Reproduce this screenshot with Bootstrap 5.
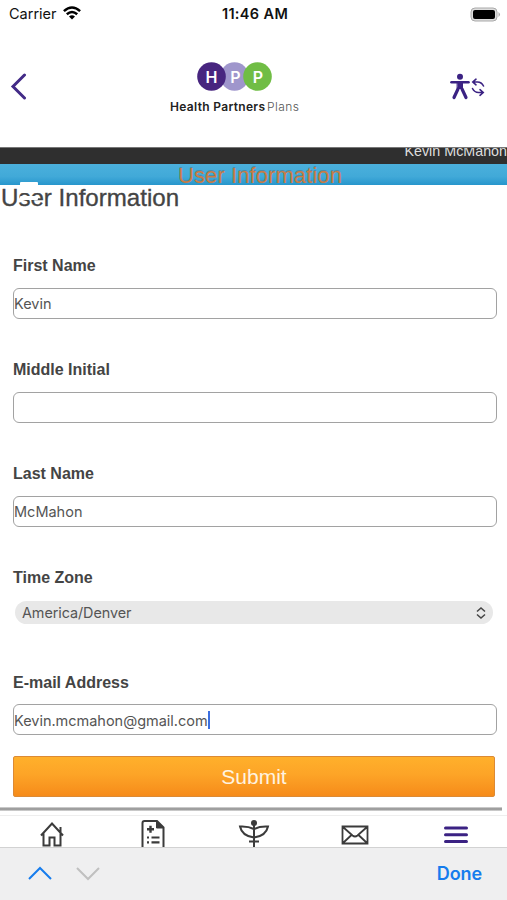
<!DOCTYPE html>
<html lang="en">
<head>
<meta charset="utf-8">
<meta name="viewport" content="width=device-width, initial-scale=1">
<title>User Information</title>
<link rel="stylesheet" href="https://cdn.jsdelivr.net/npm/bootstrap@5.3.0/dist/css/bootstrap.min.css">
<style>
body{height:900px;overflow:hidden;background:#fff;color:#444;font-family:"Liberation Sans",Arial,sans-serif}
svg{display:block;flex:none}
.status{height:28px;font:14.5px/28px Inter,sans-serif;color:#111;padding:0 6px 0 9px}
.status>div{flex:1 1 0}
.clock{font-weight:600;letter-spacing:.35px}
.wifi{margin-top:-3px;margin-left:6px}
.brandbar{height:119px;padding:32px 21px 0 10px}
.back{margin-top:12px}
.logo{margin-left:124px}
.access{margin-top:12px}
.userstrip{height:17px;background:#2f2f2f;border-top:1px solid #777;color:#ddd;font-size:14.3px;line-height:7px;overflow:hidden}
.titlestrip{height:21px;background:linear-gradient(#4bb0dc,#41a9d8 60%,#2796cc);color:#c97c45;font-size:22.2px;line-height:23px;text-shadow:0 -1px 0 #4a8ca8;padding-left:13px}
.heading{font-size:24.1px;line-height:25px;height:24px;padding-left:1px;margin:0;font-weight:400;-webkit-text-stroke:.35px #444}
.burger{position:absolute;left:20px;top:-3px;width:18px}
.burger i{display:block;height:4px;background:#fff;margin-bottom:3px;border-radius:1px}
.fields{padding:43px 10px 0 13px}
.fields .form-label{font-size:16px;font-weight:700;line-height:28px;height:24px;margin:0 0 12px;display:block}
.fields .form-control{height:31px;border:1.5px solid #a2a2a2;border-radius:6px;padding:0;font:14.5px/30px Inter,sans-serif;color:#555;box-shadow:none}
.fields .form-control.active{letter-spacing:-.02px}
.fields .active span:first-child{padding-top:2px}
.group{height:104px}
.late{padding-top:1px}
.late .form-label{margin-bottom:11px}
.zone{height:23px;border-radius:12px;background:#e8e8e8;margin:13px 4px 0 2px;padding:0 7px;font:14.4px/24px Inter,sans-serif;color:#555}
.zone span{padding-top:1px;letter-spacing:-.07px}
.caret{width:2px;height:18px;background:#3c6fe0}
.submit{height:41px;margin:21px 2px 0 0;border:1px solid #dc8a35;border-radius:2px;background:linear-gradient(#ffb02b,#fda427 45%,#f68b1a);color:#fff3e0;font-size:21px;line-height:38px;padding:0;width:482px}
.rule{height:4px;margin:10px 5px 0 0;background:linear-gradient(#ddd,#8a8a8a 50%,#ddd)}
.tabs{height:32px;margin-top:4px;border-top:1px solid #eee;overflow:hidden;padding-left:1px}
.tabs>div{width:101.3px;display:flex;justify-content:center}
.keys{height:53px;background:#efeff0;border-top:1px solid #d2d2d2;padding:0 25px 0 28px}
.done{font:600 18px/1 Inter,sans-serif;color:#167ced;letter-spacing:-.1px}
</style>
</head>
<body class="d-flex flex-column">
<header>
<div class="status d-flex align-items-center">
<div class="d-flex align-items-center"><span>Carrier</span>
<svg class="wifi" width="18" height="14" viewBox="0 0 18 14" fill="none" stroke="#000" stroke-width="2.5"><path d="M.9 5.2Q9-2.2 17.1 5.2M3.8 8.3Q9 3.600 14.200 8.300"/><path d="M6 10.400Q9 8 12 10.400L9 13.500z" fill="#000" stroke="none"/></svg></div>
<span class="clock">11:46 AM</span>
<div class="d-flex justify-content-end"><svg width="31" height="15" viewBox="0 0 31 15"><rect x="1" y="1" width="26" height="13" rx="4" fill="#ddd" stroke="#aaa"/><rect x="3" y="3" width="22" height="9" rx="2" fill="#000"/><path d="M28.500 5q3 2.500 0 5z" fill="#aaa"/></svg></div>
</div>
<div class="brandbar d-flex align-items-start">
<svg class="back" width="36" height="28" viewBox="0 0 36 28" fill="none" stroke="#432b87" stroke-width="3" stroke-linecap="round"><path d="M14.500 3 3 14.500 14.500 26"/></svg>
<svg class="logo" width="130" height="56" viewBox="0 0 130 56" font-family="Inter,sans-serif">
<circle cx="64.500" cy="16.500" r="14.300" fill="#9f96cc"/><circle cx="41.500" cy="16.500" r="14.300" fill="#47257f"/><circle cx="87.500" cy="16.500" r="14.300" fill="#70bd45"/>
<g fill="#fff" font-size="16" font-weight="600" text-anchor="middle"><text x="41.500" y="22.500">H</text><text x="65.500" y="22.500">P</text><text x="88" y="22.500">P</text></g>
<text x="0" y="50.500" font-size="12" font-weight="600" fill="#222" textLength="95">Health Partners</text><text x="97" y="50.500" font-size="12" font-weight="300" fill="#555" textLength="32">Plans</text></svg>
<svg class="access ms-auto" width="40" height="30" viewBox="0 0 40 30" fill="none" stroke="#3b2283" stroke-linecap="round"><circle cx="14" cy="4.700" r="3" fill="#3b2283" stroke="none"/><path d="M5.500 10.200H22.500" stroke-width="2.600"/><path d="M11.500 10.500h5v6h-5z" fill="#3b2283"/><path d="m12 17-4 8.500M16 17l4 8.500" stroke-width="3.200"/><path d="M27 10h4.500q4 0 6 4M30 7.200l-3.200 2.800 3.200 2.800M37 20.500h-4.500q-4 0-6-4M34 17.700l3.200 2.800-3.200 2.800" stroke-width="1.600"/></svg>
</div>
</header>
<div class="userstrip text-end">Kevin McMahon</div>
<div class="titlestrip text-center">User Information</div>
<main class="position-relative">
<h1 class="heading">User Information</h1>
<div class="burger"><i></i><i></i><i></i></div>
<form class="fields">
<div class="group"><label class="form-label">First Name</label><div class="form-control">Kevin</div></div>
<div class="group"><label class="form-label">Middle Initial</label><div class="form-control"></div></div>
<div class="group"><label class="form-label">Last Name</label><div class="form-control">McMahon</div></div>
<div class="group"><label class="form-label">Time Zone</label><div class="zone d-flex align-items-center justify-content-between"><span>America/Denver</span><svg width="10" height="12" viewBox="0 0 10 12" fill="none" stroke="#444" stroke-width="1.500"><path d="m1 4.500 4-3.500 4 3.500M1 7.500 5 11l4-3.500"/></svg></div></div>
<div class="late"><label class="form-label">E-mail Address</label><div class="form-control active d-flex align-items-center"><span>Kevin.mcmahon@gmail.com</span><span class="caret"></span></div></div>
<button type="button" class="btn submit">Submit</button>
</form>
<div class="rule"></div>
</main>
<nav class="tabs d-flex">
<div><svg width="26" height="32" viewBox="0 0 26 32" fill="none" stroke="#3b3b3b" stroke-width="2"><path d="M2 19.500 13 7.500l11 12M4.500 17.500V29.500H10.500V21.500h5v8h6V17.500M21.500 16V11"/></svg></div>
<div><svg width="26" height="32" viewBox="0 0 26 32" fill="none" stroke="#3b3b3b" stroke-width="2"><path d="M2.500 33V7q0-2 2-2H17l6.500 6.500V33"/><path d="M16.500 5v7h7z" fill="#3b3b3b" stroke-width="1"/><path d="M7 13.200h7M10.500 9.700v7" stroke-width="2.400"/><path d="M7 21.500h2M11.500 21.500h8M7 26.300h2M11.500 26.300h8" stroke-width="2.200"/></svg></div>
<div><svg width="32" height="32" viewBox="0 0 32 32" fill="none" stroke="#3b3b3b" stroke-width="2"><circle cx="16" cy="7" r="3" fill="#3b3b3b" stroke="none"/><path d="M16 8v25M16 13Q10 10 2 10.500 4 20 16 21.500M16 13q6-3 14-2.500Q28 20 16 21.500M11 25.500h10"/></svg></div>
<div><svg width="28" height="32" viewBox="0 0 28 32" fill="none" stroke="#3b3b3b" stroke-width="1.800"><path d="M1.500 10.500h25v17h-25zM2 11l9.500 8.500q2.500 2 5 0L26 11M2 27l8.500-8M26 27l-8.500-8"/></svg></div>
<div><svg width="26" height="32" viewBox="0 0 26 32" fill="none" stroke="#3b2283" stroke-width="3" stroke-linecap="round"><path d="M2.500 12h21M2.500 18.700h21M2.500 25.500h21"/></svg></div>
</nav>
<div class="keys d-flex align-items-center">
<svg width="72" height="16" viewBox="0 0 72 16" fill="none" stroke-width="2"><path d="m1 13 11-11 11 11" stroke="#167ced"/><path d="m49 2 11 11L71 2" stroke="#c0c0c0"/></svg>
<span class="done ms-auto">Done</span></div>
<script src="https://cdn.jsdelivr.net/npm/bootstrap@5.3.0/dist/js/bootstrap.bundle.min.js"></script>
</body>
</html>
